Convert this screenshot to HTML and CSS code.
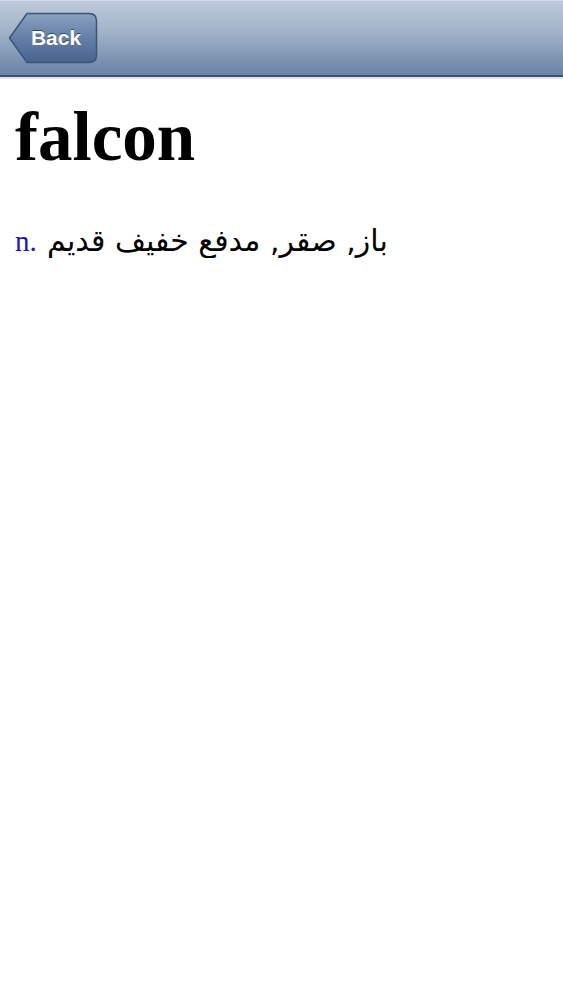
FILE: index.html
```html
<!DOCTYPE html>
<html lang="en">
<head>
  <meta charset="UTF-8">
  <meta name="viewport" content="width=device-width, initial-scale=1.0">
  <title>falcon</title>
  <link rel="stylesheet" href="styles.css">
</head>
<body>
  <header class="navbar">
    <button class="back-btn">
      <svg class="back-shape" width="90" height="52" viewBox="0 0 90 52">
        <defs>
          <linearGradient id="btnGrad" x1="0" y1="0" x2="0" y2="1">
            <stop offset="0" stop-color="#8aa1c0"/>
            <stop offset="0.5" stop-color="#647fa6"/>
            <stop offset="1" stop-color="#48648f"/>
          </linearGradient>
        </defs>
        <path d="M1.5 26 L19 1.5 H81 Q88.5 1.5 88.5 9 V43 Q88.5 50.5 81 50.5 H19 Z" fill="url(#btnGrad)" stroke="#3b5478" stroke-width="1.5" stroke-linejoin="round"/>
      </svg>
      <span class="back-label">Back</span>
    </button>
  </header>
  <main class="entry">
    <h1 class="word">falcon</h1>
    <p class="definition"><span class="pos">n.</span> <span class="meaning" dir="rtl">باز, صقر, مدفع خفيف قديم</span></p>
  </main>
</body>
</html>
```

FILE: styles.css
```css
/* Page */
body {
  margin: 0;
  padding: 0;
  background-color: #ffffff;
  font-family: "Liberation Serif", "Times New Roman", serif;
  color: #000;
}

/* Navigation bar */
.navbar {
  height: 77px;
  box-sizing: border-box;
  padding: 0 0 0 8px;
  display: flex;
  align-items: center;
  background: linear-gradient(to bottom, #bccadb 0%, #a3b4c9 40%, #8097b4 75%, #6a83a4 100%);
  border-top: 1px solid #cfdae6;
  border-bottom: 2px solid #3d5272;
  box-shadow: 0 2px 0 #e3e3e8;
}

.back-btn {
  position: relative;
  width: 90px;
  height: 52px;
  padding: 0 0 0 6px;
  border: none;
  background: none;
  cursor: pointer;
  display: flex;
  align-items: center;
  justify-content: center;
}

.back-shape {
  position: absolute;
  left: 0;
  top: 0;
}

.back-label {
  position: relative;
  font-family: "Liberation Sans", Arial, sans-serif;
  font-weight: bold;
  font-size: 21px;
  color: #ffffff;
  text-shadow: 0 -1px 0 #2f4566;
}

/* Entry */
.entry {
  padding: 0 15px;
}

.word {
  margin: 20px 0 0 0;
  font-size: 69px;
  line-height: 80px;
  font-weight: bold;
}

.definition {
  margin: 47px 0 0 0;
  font-size: 29px;
  line-height: 34px;
}

.pos {
  color: #1a1aa6;
  margin-right: 3px;
}

.meaning {
  font-family: "DejaVu Sans", sans-serif;
  font-size: 30px;
  unicode-bidi: isolate;
}
```
